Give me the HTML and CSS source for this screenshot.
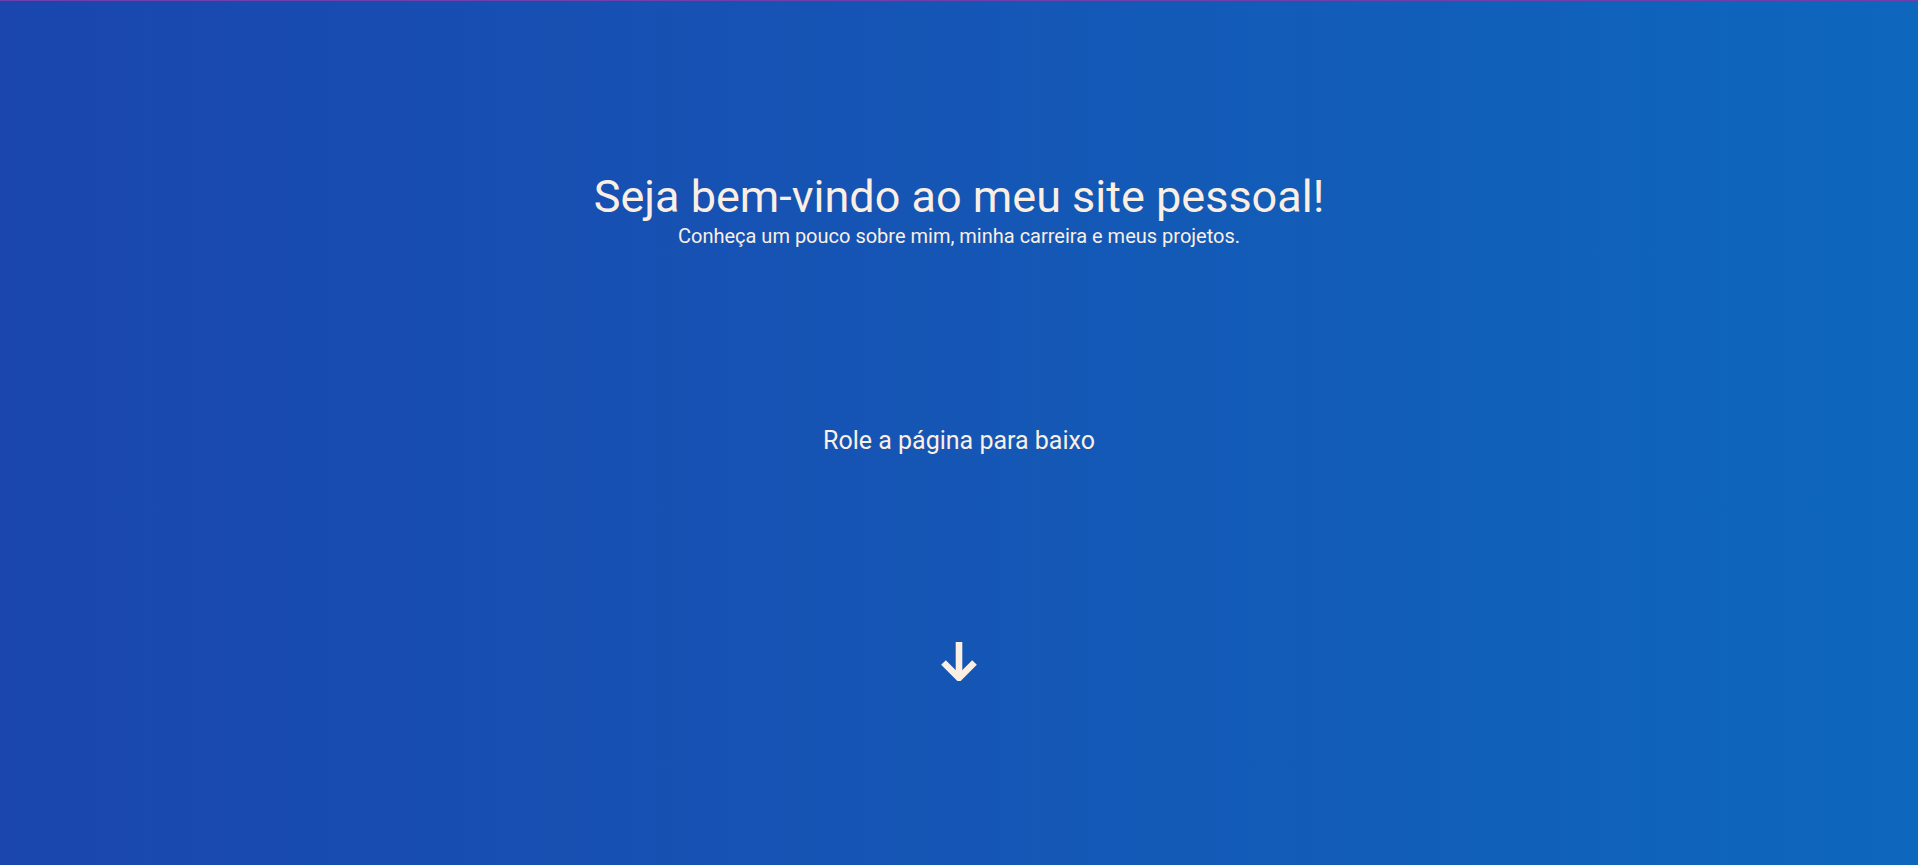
FILE: index.html
```html
<!DOCTYPE html>
<html lang="pt-BR">
<head>
<meta charset="utf-8">
<title>Site pessoal</title>
<link rel="stylesheet" href="styles.css">
</head>
<body>
<main class="hero">
  <header class="intro">
    <h1 class="title">Seja bem-vindo ao meu site pessoal!</h1>
    <p class="subtitle">Conheça um pouco sobre mim, minha carreira e meus projetos.</p>
  </header>
  <section class="scroll">
    <p class="scroll-text">Role a página para baixo</p>
    <svg class="arrow" width="40" height="40" viewBox="0 0 40 40" aria-hidden="true">
      <path d="M20 1 V37" fill="none" stroke="#fbefe3" stroke-width="6.6"/>
      <path d="M4.5 21.5 L20 37 L35.5 21.5" fill="none" stroke="#fbefe3" stroke-width="6.6" stroke-linejoin="miter"/>
    </svg>
  </section>
</main>
</body>
</html>
```
FILE: styles.css
```css
html, body {
  margin: 0;
  padding: 0;
  height: 100%;
}
body {
  font-family: Roboto, "Liberation Sans", sans-serif;
  color: #fbefe3;
  background: linear-gradient(to right, #1a46ad 0%, #1556b5 50%, #0d67bc 100%);
  border-top: 1px solid #6f3fae;
  box-sizing: border-box;
  overflow: hidden;
}
.hero {
  display: flex;
  flex-direction: column;
  align-items: center;
}
.intro {
  display: flex;
  flex-direction: column;
  align-items: center;
  padding-top: 169px;
}
.title {
  margin: 0;
  font-size: 45px;
  font-weight: 400;
  line-height: 53px;
}
.subtitle {
  margin: 2px 0 0;
  font-size: 20px;
  line-height: 23px;
}
.scroll {
  display: flex;
  flex-direction: column;
  align-items: center;
  padding-top: 178px;
}
.scroll-text {
  margin: 0;
  font-size: 25px;
  line-height: 29px;
}
.arrow {
  display: block;
  margin-top: 186px;
}
```
